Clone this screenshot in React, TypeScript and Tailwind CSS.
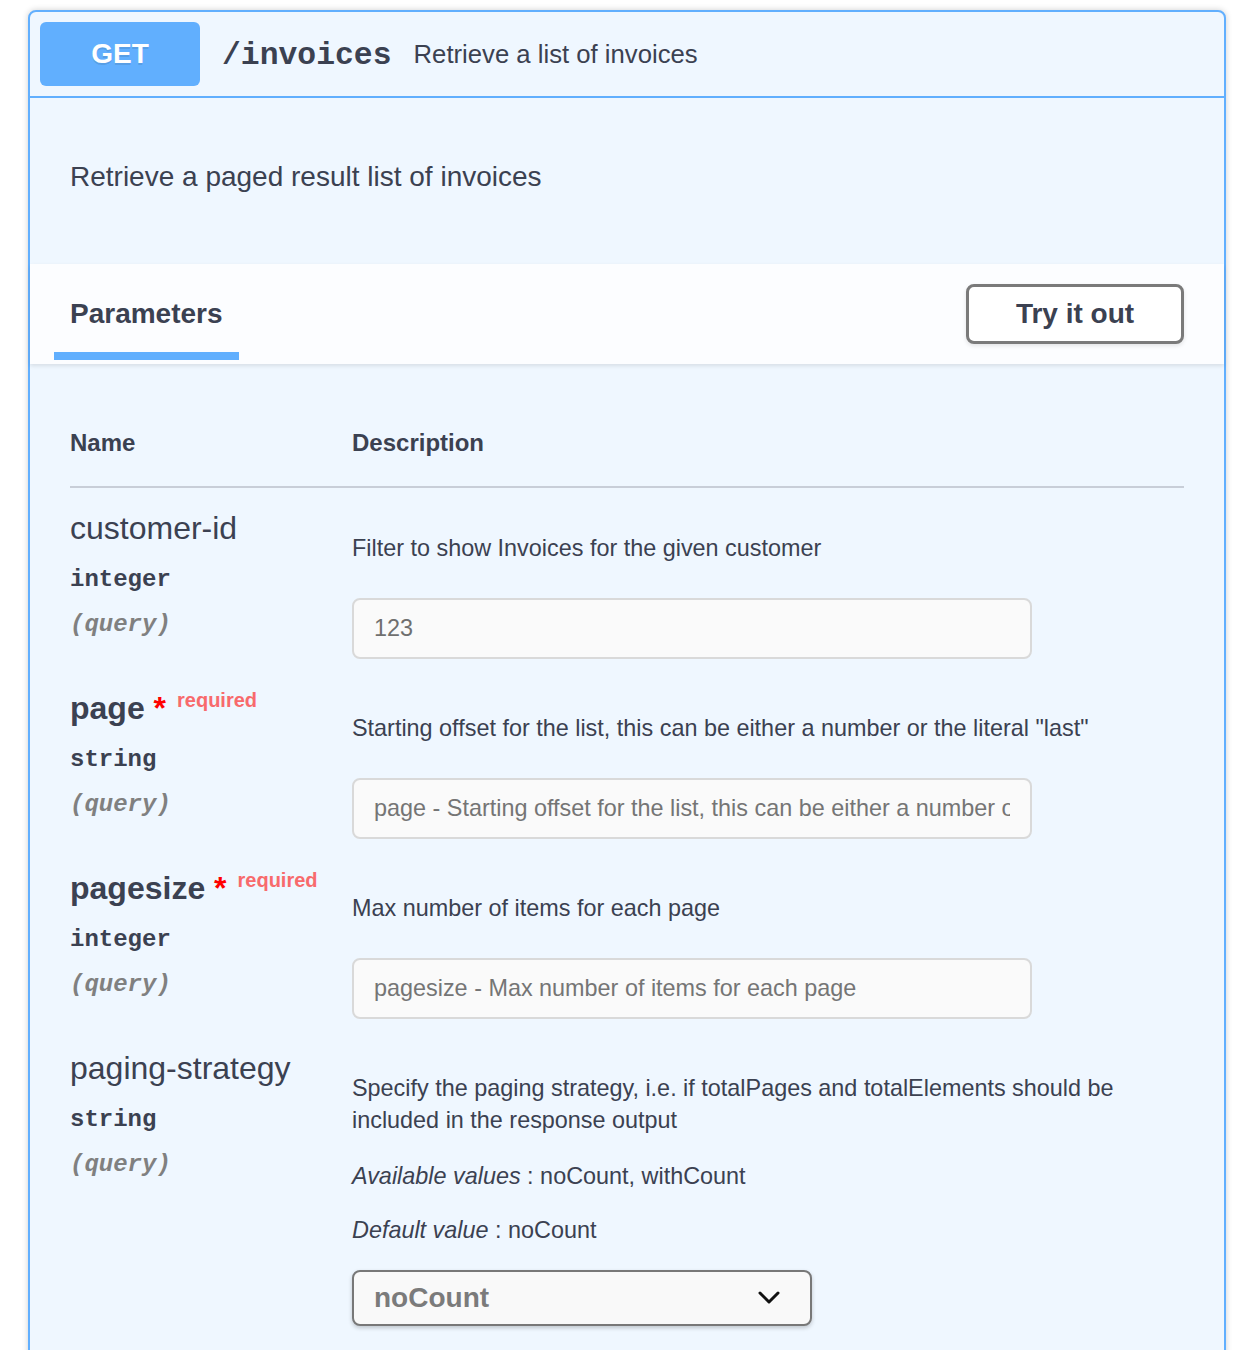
import React from "react";

const sans = { fontFamily: '"Liberation Sans", Arial, Helvetica, sans-serif' };
const mono = { fontFamily: '"Liberation Mono", "Courier New", monospace' };

function NameCell({
  name,
  type,
  required,
}: {
  name: string;
  type: string;
  required?: boolean;
}) {
  return (
    <div className="w-[282px] shrink-0">
      <div
        className={`h-[40px] leading-[40px] text-[32px] text-[#3b4151] whitespace-nowrap ${
          required ? "font-bold" : "font-normal"
        }`}
      >
        {name}
        {required && (
          <>
            <span className="text-[#ff0000]">&nbsp;*</span>
            <span className="relative top-[-12px] pl-[11px] text-[20px] font-bold text-[#f86a6c]">
              required
            </span>
          </>
        )}
      </div>
      <div
        className="mt-[18px] h-[28px] leading-[28px] text-[24px] font-bold text-[#3b4151]"
        style={mono}
      >
        {type}
      </div>
      <div
        className="mt-[17px] h-[28px] leading-[28px] text-[24px] font-bold italic text-[#808080]"
        style={mono}
      >
        (query)
      </div>
    </div>
  );
}

function TextInput({ value, placeholder }: { value?: string; placeholder?: string }) {
  return (
    <div className="mt-[34px] w-[680px] h-[61px] rounded-[8px] border-2 border-[#d9d9d9] bg-[#fafafa] pl-[20px] pr-[20px] flex items-center overflow-hidden">
      <span
        className={`text-[23.4px] whitespace-nowrap overflow-hidden ${
          value ? "text-[#6f6f6f]" : "text-[#757575]"
        }`}
      >
        {value ?? placeholder}
      </span>
    </div>
  );
}

function Row({ children }: { children: React.ReactNode }) {
  return <div className="flex pt-[20px] pb-[9px]">{children}</div>;
}

export default function App() {
  return (
    <div className="min-h-[1350px] bg-white pt-[10px] pl-[28px]" style={sans}>
      <div className="w-[1198px] min-h-[1400px] border-2 border-[#61affe] rounded-t-[8px] bg-[#eff7ff] shadow-[0_0_6px_rgba(0,0,0,0.19)] text-[#3b4151]">
        {/* Summary header */}
        <div className="h-[86px] border-b-2 border-[#61affe] flex items-center pl-[10px] pr-[10px]">
          <div className="w-[160px] h-[64px] rounded-[6px] bg-[#61affe] flex items-center justify-center">
            <span className="text-[28px] font-bold text-white [text-shadow:0_2px_0_rgba(0,0,0,0.1)]">
              GET
            </span>
          </div>
          <span
            className="ml-[22px] mt-[4px] text-[31.4px] font-bold text-[#3b4151]"
            style={mono}
          >
            /invoices
          </span>
          <span className="ml-[22px] text-[25.7px] text-[#3b4151]">Retrieve a list of invoices</span>
        </div>

        {/* Description */}
        <div className="h-[166px] pt-[61px] pl-[40px]">
          <p className="text-[28px] leading-[36px] text-[#3b4151]">
            Retrieve a paged result list of invoices
          </p>
        </div>

        {/* Tab header */}
        <div className="h-[100px] bg-white/80 shadow-[0_2px_4px_rgba(0,0,0,0.1)] flex items-center justify-between pl-[40px] pr-[40px]">
          <div className="relative h-[100px] flex items-center">
            <span className="text-[28px] font-bold text-[#3b4151]">Parameters</span>
            <span className="absolute left-[-16px] top-[88px] w-[185px] h-[8px] bg-[#61affe]" />
          </div>
          <button className="w-[218px] h-[60px] rounded-[8px] border-[3px] border-[#7a7a7a] bg-white shadow-[0_2px_4px_rgba(0,0,0,0.1)] text-[28px] font-bold text-[#3b4151]">
            Try it out
          </button>
        </div>

        {/* Parameters table */}
        <div className="pl-[40px] pr-[40px]">
          <div className="flex pt-[63px] pb-[27px] border-b-2 border-[#c8ced8]">
            <div className="w-[282px] text-[24px] leading-[32px] font-bold">Name</div>
            <div className="text-[24px] leading-[32px] font-bold">Description</div>
          </div>

          <Row>
            <NameCell name="customer-id" type="integer" />
            <div className="flex-1 pt-[24px]">
              <p className="text-[23.4px] leading-[32px]">Filter to show Invoices for the given customer</p>
              <TextInput value="123" />
            </div>
          </Row>

          <Row>
            <NameCell name="page" type="string" required />
            <div className="flex-1 pt-[24px]">
              <p className="text-[23.4px] leading-[32px]">
                Starting offset for the list, this can be either a number or the literal "last"
              </p>
              <TextInput placeholder='page - Starting offset for the list, this can be either a number or the literal "last"' />
            </div>
          </Row>

          <Row>
            <NameCell name="pagesize" type="integer" required />
            <div className="flex-1 pt-[24px]">
              <p className="text-[23.4px] leading-[32px]">Max number of items for each page</p>
              <TextInput placeholder="pagesize - Max number of items for each page" />
            </div>
          </Row>

          <Row>
            <NameCell name="paging-strategy" type="string" />
            <div className="flex-1 pt-[24px]">
              <p className="text-[23.4px] leading-[32px]">
                Specify the paging strategy, i.e. if totalPages and totalElements should be included in
                the response output
              </p>
              <p className="mt-[24px] text-[23.4px] leading-[32px]">
                <i>Available values</i> : noCount, withCount
              </p>
              <p className="mt-[22px] text-[23.4px] leading-[32px]">
                <i>Default value</i> : noCount
              </p>
              <div className="mt-[24px] w-[460px] h-[56px] rounded-[8px] border-2 border-[#787878] bg-[#f9f9f9] shadow-[0_2px_4px_rgba(0,0,0,0.2)] flex items-center justify-between pl-[20px] pr-[30px]">
                <span className="text-[28px] font-bold text-[#7b7b7b]">noCount</span>
                <svg width="22" height="14" viewBox="0 0 22 14" fill="none">
                  <polyline
                    points="2,2 11,11 20,2"
                    stroke="#111"
                    strokeWidth="3"
                    strokeLinecap="round"
                    strokeLinejoin="round"
                  />
                </svg>
              </div>
            </div>
          </Row>
        </div>
      </div>
    </div>
  );
}
